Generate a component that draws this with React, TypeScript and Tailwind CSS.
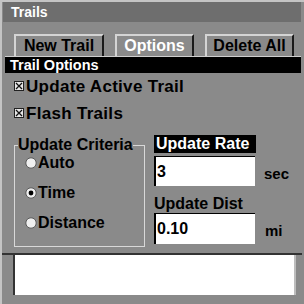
import React from "react";

const font = { fontFamily: '"Liberation Sans", Arial, sans-serif' };

function CheckBox() {
  return (
    <svg width="10" height="10" viewBox="0 0 10 10" className="shrink-0">
      <rect x="0.5" y="0.5" width="9" height="9" fill="#e8e8e8" stroke="#222" />
      <path d="M2 2 L8 8 M8 2 L2 8" stroke="#111" strokeWidth="1.3" />
    </svg>
  );
}

function Radio({ on }: { on?: boolean }) {
  return (
    <svg width="12" height="12" viewBox="0 0 12 12" className="shrink-0">
      <circle cx="6" cy="6" r="5.2" fill="#f0f0f0" stroke="#5a5a5a" strokeWidth="1" />
      {on && <circle cx="6" cy="6" r="2.4" fill="#000" />}
    </svg>
  );
}

function Tab({ label, w, active }: { label: string; w: string; active?: boolean }) {
  return (
    <div
      className={`${w} h-[22px] flex items-center justify-center border-t-2 border-l-2 border-r-2 border-t-[#d4d4d4] border-l-[#d4d4d4] border-r-[#1a1a1a] text-[16px] font-bold leading-none ${
        active ? "text-white" : "text-black"
      }`}
    >
      {label}
    </div>
  );
}

export default function App() {
  return (
    <div
      style={font}
      className="w-[304px] h-[304px] bg-[#8a8a8a] flex flex-col border-t-2 border-l-2 border-[#c4c4c4] overflow-hidden"
    >
      <div className="mx-[1px] mr-[3px] h-[20px] bg-[#6e6e6e] flex items-center pl-[8px] text-white font-bold text-[14px] leading-none">
        Trails
      </div>
      <div className="flex mt-[12px] ml-[12px] gap-[11px]">
        <Tab label="New Trail" w="w-[90px]" />
        <Tab label="Options" w="w-[79px]" active />
        <Tab label="Delete All" w="w-[89px]" />
      </div>
      <div className="mx-[3px] mr-[3px] h-[17px] bg-black border-t border-[#cfcfcf] flex items-center pl-[5px] text-white font-bold text-[14.5px] leading-none">
        Trail Options
      </div>
      <div className="flex items-center ml-[12px] mt-[6px] h-[14px] gap-[2px] text-black font-bold text-[17px] tracking-[0.3px] leading-none">
        <CheckBox />
        <span>Update Active Trail</span>
      </div>
      <div className="flex items-center ml-[12px] mt-[13px] h-[14px] gap-[2px] text-black font-bold text-[17px] tracking-[0.3px] leading-none">
        <CheckBox />
        <span>Flash Trails</span>
      </div>
      <div className="flex mt-[17px] ml-[12px]">
        <fieldset className="w-[131px] h-[110px] border border-[#d8d8d8] pl-[3px] pt-[2px]">
          <legend className="px-0 text-[16px] font-bold leading-none text-black">Update Criteria</legend>
          <div className="flex flex-col gap-[14px] pl-[7px]">
            <div className="flex items-center gap-[1px] text-[16px] font-bold leading-none text-black">
              <Radio />
              <span>Auto</span>
            </div>
            <div className="flex items-center gap-[1px] text-[16px] font-bold leading-none text-black">
              <Radio on />
              <span>Time</span>
            </div>
            <div className="flex items-center gap-[1px] text-[16px] font-bold leading-none text-black">
              <Radio />
              <span>Distance</span>
            </div>
          </div>
        </fieldset>
        <div className="ml-[9px] mt-[-2px] flex flex-col">
          <div className="w-[102px] h-[18px] bg-black text-white font-bold text-[16px] leading-none flex items-center pl-[2px]">
            Update Rate
          </div>
          <div className="flex items-center mt-[3px]">
            <div className="w-[101px] h-[30px] bg-white border-l-2 border-t border-black flex items-center pl-[1px] text-[16px] font-bold text-black leading-none">
              3
            </div>
            <span className="ml-[9px] mt-[4px] text-[15px] font-bold text-black leading-none">sec</span>
          </div>
          <div className="mt-[10px] text-[16px] font-bold text-black leading-none">Update Dist</div>
          <div className="flex items-center mt-[1px]">
            <div className="w-[101px] h-[31px] bg-white border-l-2 border-t border-black flex items-center pl-[1px] text-[16px] font-bold text-black leading-none">
              0.10
            </div>
            <span className="ml-[10px] mt-[4px] text-[15px] font-bold text-black leading-none">mi</span>
          </div>
        </div>
      </div>
      <div className="mt-[6px] mr-[2px] border-t-2 border-[#333]" />
      <div className="ml-[11px] mr-[8px] h-[40px] bg-white border-l-2 border-[#333] border-r-2 border-r-[#bdbdbd]" />
    </div>
  );
}
